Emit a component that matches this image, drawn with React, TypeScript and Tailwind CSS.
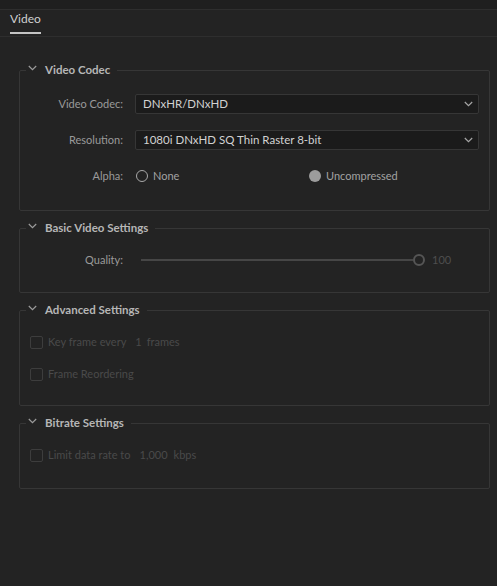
import React from "react";

const FONT = { fontFamily: 'Lato, "Open Sans", "Liberation Sans", sans-serif' };

const Chevron: React.FC<{ className?: string }> = ({ className }) => (
  <svg className={className} width="9" height="6" viewBox="0 0 9 6" fill="none" stroke="currentColor" strokeWidth="1.2">
    <polyline points="0.8 1 4.5 4.6 8.2 1" />
  </svg>
);

const Section: React.FC<{ title: string; className?: string; children: React.ReactNode }> = ({
  title,
  className,
  children,
}) => (
  <fieldset className={`border border-[#363636] rounded-[2px] ${className ?? ""}`}>
    <legend className="ml-[6px] h-4 pl-[2px] pr-[7px] flex items-center">
      <Chevron className="text-[#9c9c9c] -mt-[4px]" />
      <span className="ml-[8px] text-[11.5px] font-bold text-[#b6b6b6]">{title}</span>
    </legend>
    {children}
  </fieldset>
);

const Select: React.FC<{ value: string }> = ({ value }) => (
  <div className="h-5 w-full flex items-center justify-between bg-[#1b1b1b] border border-[#363636] rounded-[2px] pl-[7px] pr-[5px]">
    <span className="text-[11.5px] text-[#d2d2d2]">{value}</span>
    <Chevron className="text-[#a6a6a6]" />
  </div>
);

const Checkbox: React.FC<{ children: React.ReactNode }> = ({ children }) => (
  <div className="h-5 flex items-center pl-[10px] text-[11px] text-[#4a4a4a]">
    <div className="w-[13px] h-[13px] border border-[#3d3d3d] rounded-[2px]" />
    <div className="ml-[5px] flex items-center">{children}</div>
  </div>
);

export default function App() {
  return (
    <div className="w-[497px] h-[586px] bg-[#232323] flex flex-col" style={FONT}>
      <div className="h-[10px] bg-[#1f1f1f] border-b border-[#2e2e2e]" />
      <div className="h-[27px] border-b border-[#2e2e2e] flex items-end pl-[10px]">
        <div className="flex flex-col items-start">
          <span className="text-[12px] text-[#d0d0d0] leading-none mb-[7px]">Video</span>
          <div className="h-[2px] w-[31px] bg-[#c4c4c4] mb-[2px]" />
        </div>
      </div>

      <div className="pt-[25px] pl-[19px] pr-[7px] flex flex-col gap-[9px]">
        <Section title="Video Codec" className="pt-4 pb-6 pr-[10px]">
          <div className="grid grid-cols-[103px_1fr] gap-x-3 gap-y-4 items-center text-[11px]">
            <span className="text-right text-[#9a9a9a]">Video Codec:</span>
            <Select value="DNxHR/DNxHD" />
            <span className="text-right text-[#9a9a9a]">Resolution:</span>
            <Select value="1080i DNxHD SQ Thin Raster 8-bit" />
            <span className="text-right text-[#9a9a9a]">Alpha:</span>
            <div className="h-5 flex items-center">
              <div className="flex items-center w-[174px] pl-[1px]">
                <div className="w-[12px] h-[12px] rounded-full border-[1.5px] border-[#a9a9a9]" />
                <span className="ml-[5px] text-[#a2a2a2]">None</span>
              </div>
              <div className="flex items-center">
                <div className="w-[12px] h-[12px] rounded-full bg-[#9c9c9c]" />
                <span className="ml-[5px] text-[#a2a2a2]">Uncompressed</span>
              </div>
            </div>
          </div>
        </Section>

        <Section title="Basic Video Settings" className="pt-[14px] pb-[22px] pr-[10px]">
          <div className="grid grid-cols-[103px_1fr] gap-x-3 items-center text-[11px]">
            <span className="text-right text-[#9a9a9a]">Quality:</span>
            <div className="h-5 flex items-center pl-[6px]">
              <div className="w-[272px] h-[2px] bg-[#464646]" />
              <div className="w-[12px] h-[12px] rounded-full border-2 border-[#555555]" />
              <span className="ml-[7px] text-[#4e4e4e]">100</span>
            </div>
          </div>
        </Section>

        <Section title="Advanced Settings" className="pt-[14px] pb-[21px]">
          <div className="flex flex-col gap-3">
            <Checkbox>
              <span>Key frame every</span>
              <span className="ml-[9px]">1</span>
              <span className="ml-[5px]">frames</span>
            </Checkbox>
            <Checkbox>
              <span>Frame Reordering</span>
            </Checkbox>
          </div>
        </Section>

        <Section title="Bitrate Settings" className="pt-[14px] pb-[23px]">
          <Checkbox>
            <span>Limit data rate to</span>
            <span className="ml-[9px]">1,000</span>
            <span className="ml-[6px]">kbps</span>
          </Checkbox>
        </Section>
      </div>
    </div>
  );
}
